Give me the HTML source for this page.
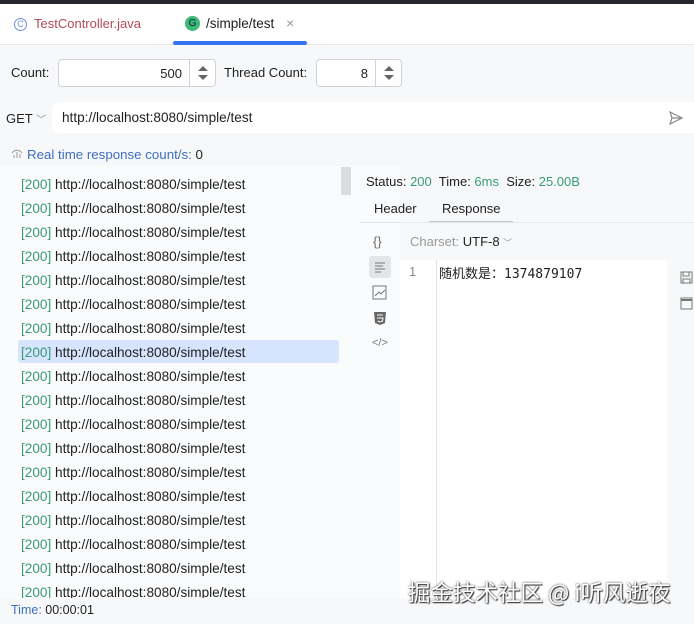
<!DOCTYPE html>
<html><head><meta charset="utf-8"><style>
*{margin:0;padding:0;box-sizing:border-box}
body{width:694px;height:624px;background:#f7f8fa;font-family:"Liberation Sans","Noto Sans CJK SC",sans-serif;font-size:13px;color:#1f1f1f;position:relative;overflow:hidden}
.a{position:absolute}
.g{color:#3a9a78}
.bl{color:#3f6fc0}
.item{position:absolute;left:18px;width:321px;height:23px;line-height:23px;padding-left:3px;font-size:13.6px;border-radius:3px}
.spin{position:absolute;background:#fff;border:1px solid #cfd2d8;border-radius:4px;height:28px}
.arr{position:absolute;right:0;top:0;width:26px;height:26px;border-left:1px solid #cfd2d8}
</style></head><body>
<div class="a" style="left:0;top:0;width:694px;height:4px;background:#27282c"></div>
<div class="a" style="left:0;top:4px;width:694px;height:41px;background:#fff;border-bottom:1px solid #e6e7ea"></div>
<div class="a" style="left:14px;top:18px;width:13px;height:13px;border:1.3px solid #6d8fe0;border-radius:50%;font-size:9px;line-height:10px;text-align:center;color:#6d8fe0">C</div>
<div class="a" style="left:34px;top:16px;color:#b24a5e">TestController.java</div>
<div class="a" style="left:185px;top:16px;width:15px;height:15px;background:#3cb878;border-radius:50%;color:#123;font-size:10px;line-height:15px;text-align:center">G</div>
<div class="a" style="left:206px;top:16px;font-size:13.5px">/simple/test</div>
<div class="a" style="left:286px;top:15px;color:#999;font-size:14px">×</div>
<div class="a" style="left:173px;top:41px;width:134px;height:4px;background:#3574f0;border-radius:2px"></div>

<div class="a" style="left:11px;top:65px">Count:</div>
<div class="spin" style="left:58px;top:59px;width:158px"><span class="a" style="right:33px;top:6px">500</span><div class="arr"><svg width="26" height="26"><path d="M8 11l5-5 5 5zM8 15l5 5 5-5z" fill="#666"/></svg></div></div>
<div class="a" style="left:224px;top:65px">Thread Count:</div>
<div class="spin" style="left:316px;top:59px;width:86px"><span class="a" style="right:33px;top:6px">8</span><div class="arr"><svg width="26" height="26"><path d="M8 11l5-5 5 5zM8 15l5 5 5-5z" fill="#666"/></svg></div></div>

<div class="a" style="left:6px;top:111px">GET <span style="color:#888;font-size:10px">﹀</span></div>
<div class="a" style="left:52px;top:102px;width:642px;height:31px;background:#fff;border-radius:8px 0 0 8px"></div>
<div class="a" style="left:62px;top:110px;font-size:13.6px">http://localhost:8080/simple/test</div>
<svg class="a" style="left:668px;top:110px" width="16" height="16"><path d="M2 2l12 6-12 6 2-6z M4 8h10" fill="none" stroke="#888" stroke-width="1.2"/></svg>

<svg class="a" style="left:11px;top:148px" width="12" height="11"><path d="M1 5a6 6 0 0 1 10 0M3 10V7M6 10V4M9 10V6" stroke="#999" fill="none"/></svg>
<div class="a" style="left:27px;top:147px;font-size:13.3px"><span class="bl">Real time response count/s:</span> 0</div>

<div class="a" style="left:0;top:166px;width:400px;height:432px;background:#fafbfc"></div>
<div class="item" style="top:340px;background:#d6e4fd"></div>
<div class="a" style="left:341px;top:167px;width:10px;height:28px;background:#dcdde0"></div>
<div id="list"></div>
<script>
var h='';for(var i=0;i<18;i++){h+='<div class="item" style="top:'+(173+i*24)+'px"><span class="g">[200]</span> http://localhost:8080/simple/test</div>'}
document.getElementById('list').innerHTML=h;
</script>
<div class="a" style="left:0;top:598px;width:400px;height:26px;background:#f7f8fa"></div>
<div class="a" style="left:11px;top:603px;font-size:12.5px"><span class="bl">Time:</span> 00:00:01</div>

<div class="a" style="left:366px;top:174px">Status: <span class="g">200</span>&nbsp; Time: <span class="g">6ms</span>&nbsp; Size: <span class="g">25.00B</span></div>
<div class="a" style="left:374px;top:201px">Header</div>
<div class="a" style="left:442px;top:201px">Response</div>
<div class="a" style="left:429px;top:221px;width:84px;height:2px;background:#c4c6cb"></div>
<div class="a" style="left:360px;top:222px;width:334px;height:1px;background:#e6e7ea"></div>

<div class="a" style="left:373px;top:234px;color:#666">{}</div>
<div class="a" style="left:369px;top:256px;width:22px;height:22px;background:#e3e5e9;border-radius:3px"></div>
<svg class="a" style="left:373px;top:260px" width="14" height="14"><path d="M2 3h10M2 6h8M2 9h10M2 12h6" stroke="#777"/></svg>
<svg class="a" style="left:372px;top:285px" width="15" height="15"><rect x="1" y="1" width="13" height="13" fill="none" stroke="#777"/><path d="M3 11l4-4 2 2 4-4" stroke="#777" fill="none"/></svg>
<svg class="a" style="left:373px;top:311px" width="14" height="15"><path d="M1 1h12l-1 11-5 2-5-2z" fill="#666"/><path d="M4 4h6M4 7h6l-.5 3-2.5 1-2.5-1" stroke="#fff" fill="none"/></svg>
<div class="a" style="left:372px;top:337px;color:#777;font-size:11px">&lt;/&gt;</div>

<div class="a" style="left:410px;top:234px;color:#999">Charset: <span style="color:#222">UTF-8</span> <span style="font-size:9px">﹀</span></div>
<div class="a" style="left:400px;top:260px;width:267px;height:338px;background:#fff"></div>
<div class="a" style="left:436px;top:260px;width:1px;height:338px;background:#e4e4e4"></div>
<div class="a" style="left:409px;top:264px;color:#888">1</div>
<div class="a" style="left:439px;top:263px;font-family:'DejaVu Sans Mono','Noto Sans CJK SC',monospace;font-size:13px">随机数是：1374879107</div>
<svg class="a" style="left:680px;top:271px" width="13" height="13"><rect x="1" y="1" width="11" height="11" fill="none" stroke="#777"/><path d="M3 1v4h6V1M3 12V8h7v4" fill="none" stroke="#777"/></svg>
<svg class="a" style="left:680px;top:297px" width="13" height="13"><rect x="1" y="1" width="11" height="11" fill="none" stroke="#777"/><path d="M1 3h11" stroke="#777" stroke-width="2"/></svg>

<div class="a" style="left:408px;top:578px;font-size:22.5px;color:#fff;text-shadow:0 0 2px #333,1px 1px 1px #333;font-family:'Noto Sans CJK SC',sans-serif;line-height:28px">掘金技术社区 @ i听风逝夜</div>
</body></html>
